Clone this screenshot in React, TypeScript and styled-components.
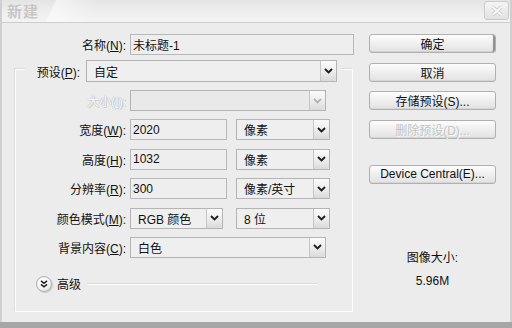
import React from 'react'
import styled, { createGlobalStyle } from 'styled-components'

const GlobalStyle = createGlobalStyle`
  html, body {
    margin: 0;
    padding: 0;
    background: #a8a8a8;
  }
  * {
    box-sizing: border-box;
  }
`

const FONT = `"Liberation Sans", "Noto Sans CJK SC", sans-serif`

const Chevron = ({ disabled }: { disabled?: boolean }) => (
  <svg width="9" height="6" viewBox="0 0 9 6">
    <polyline
      points="1,1 4.5,4.5 8,1"
      fill="none"
      stroke={disabled ? '#b4b4b4' : '#1e1e1e'}
      strokeWidth="1.9"
    />
  </svg>
)

const Select = ({
  width,
  value,
  disabled,
}: {
  width: number
  value?: string
  disabled?: boolean
}) => (
  <SelectBox $width={width} $disabled={disabled}>
    <SelectText>{value}</SelectText>
    <ArrowButton>
      <Chevron disabled={disabled} />
    </ArrowButton>
  </SelectBox>
)

const App = () => {
  return (
    <Window>
      <GlobalStyle />
      <Frame>
        <TitleBar>
          <Title>新建</Title>
          <CloseButton>
            <svg width="12" height="10" viewBox="0 0 12 10">
              <path d="M1.5 1 L10.5 9 M10.5 1 L1.5 9" stroke="#c4c4c4" strokeWidth="3.4" />
              <path d="M1.5 1 L10.5 9 M10.5 1 L1.5 9" stroke="#fafafa" strokeWidth="1.8" />
            </svg>
          </CloseButton>
        </TitleBar>

        <Body>
          <LeftColumn>
            <NameRow>
              <Label $width={111}>
                名称(<u>N</u>):
              </Label>
              <TextInput $width={224}>未标题-1</TextInput>
            </NameRow>

            <GroupBox>
              <PresetRow>
                <Label $width={49}>
                  预设(<u>P</u>):
                </Label>
                <Select width={251} value="自定" />
              </PresetRow>

              <Fields>
                <Row>
                  <Label $width={110} $disabled>
                    大小(<u>I</u>):
                  </Label>
                  <Select width={196} disabled />
                </Row>
                <Row>
                  <Label $width={110}>
                    宽度(<u>W</u>):
                  </Label>
                  <TextInput $width={97}>2020</TextInput>
                  <Spacer $w={1} />
                  <Select width={94} value="像素" />
                </Row>
                <Row>
                  <Label $width={110}>
                    高度(<u>H</u>):
                  </Label>
                  <TextInput $width={97}>1032</TextInput>
                  <Spacer $w={1} />
                  <Select width={94} value="像素" />
                </Row>
                <Row>
                  <Label $width={110}>
                    分辨率(<u>R</u>):
                  </Label>
                  <TextInput $width={97}>300</TextInput>
                  <Spacer $w={1} />
                  <Select width={94} value="像素/英寸" />
                </Row>
                <Row>
                  <Label $width={110}>
                    颜色模式(<u>M</u>):
                  </Label>
                  <Select width={93} value="RGB 颜色" />
                  <Spacer $w={5} />
                  <Select width={94} value="8 位" />
                </Row>
                <Row>
                  <Label $width={110}>
                    背景内容(<u>C</u>):
                  </Label>
                  <Select width={196} value="白色" />
                </Row>
              </Fields>

              <AdvancedRow>
                <RoundToggle>
                  <svg width="8" height="8" viewBox="0 0 8 8">
                    <polyline points="1,0.8 4,3.3 7,0.8" fill="none" stroke="#1e1e1e" strokeWidth="1.5" />
                    <polyline points="1,4.3 4,6.8 7,4.3" fill="none" stroke="#1e1e1e" strokeWidth="1.5" />
                  </svg>
                </RoundToggle>
                <AdvancedText>高级</AdvancedText>
                <Rule />
              </AdvancedRow>
            </GroupBox>
          </LeftColumn>

          <RightColumn>
            <Button $default>确定</Button>
            <Button>取消</Button>
            <Button>存储预设(S)...</Button>
            <Button $disabled>删除预设(D)...</Button>
            <Button $gap={26}>Device Central(E)...</Button>
            <SizeInfo>
              <span>图像大小:</span>
              <span>5.96M</span>
            </SizeInfo>
          </RightColumn>
        </Body>
      </Frame>
    </Window>
  )
}
export default App

const Window = styled.div`
  width: 512px;
  height: 328px;
  background: #a6a6a6;
  font-family: ${FONT};
  font-size: 12px;
  color: #111;
  overflow: hidden;
`

const Frame = styled.div`
  height: 322px;
  background: #ececec;
  border-left: 2px solid #cfcfcf;
  border-right: 2px solid #cfcfcf;
  display: flex;
  flex-direction: column;
`

const TitleBar = styled.div`
  height: 23px;
  flex-shrink: 0;
  display: flex;
  align-items: center;
  justify-content: space-between;
  padding: 0 1px 2px 5px;
  border-bottom: 1px solid #cdcdcd;
  background:
    linear-gradient(115deg, transparent 48px, rgba(255, 255, 255, 0.55) 50px, transparent 90px),
    linear-gradient(180deg, #e4e4e4 0%, #efefef 60%, #f3f3f3 100%);
`

const Title = styled.span`
  font-size: 15px;
  font-weight: bold;
  color: #c6c6c6;
  letter-spacing: 1px;
  text-shadow: 0 1px 0 #f8f8f8;
`

const CloseButton = styled.div`
  width: 25px;
  height: 19px;
  margin-top: 1px;
  border: 1px solid #cbcbcb;
  border-radius: 3px;
  background: linear-gradient(180deg, #f4f4f4, #e2e2e2);
  display: flex;
  align-items: center;
  justify-content: center;
`

const Body = styled.div`
  flex: 1;
  display: flex;
  padding: 11px 0 0 13px;
  gap: 15px;
`

const LeftColumn = styled.div`
  width: 339px;
  display: flex;
  flex-direction: column;
`

const NameRow = styled.div`
  display: flex;
  align-items: center;
  gap: 4px;
  height: 21px;
`

const Row = styled(NameRow)``

const Label = styled.span<{ $width: number; $disabled?: boolean }>`
  width: ${(p) => p.$width}px;
  flex-shrink: 0;
  text-align: right;
  white-space: nowrap;
  color: ${(p) => (p.$disabled ? '#fdfdfd' : '#111')};
  text-shadow: ${(p) =>
    p.$disabled ? '0 0 1px #b2b2b2, 0 0 1px #b2b2b2, 1px 1px 0 #d4d4d4' : 'none'};

  u {
    text-underline-offset: 1px;
  }
`

const TextInput = styled.div<{ $width: number }>`
  width: ${(p) => p.$width}px;
  height: 21px;
  border: 1px solid #b8b8b8;
  background: #eeeeee;
  padding: 0 2px;
  display: flex;
  align-items: center;
  white-space: nowrap;
`

const Spacer = styled.span<{ $w: number }>`
  width: ${(p) => p.$w}px;
  flex-shrink: 0;
`

const SelectBox = styled.div<{ $width: number; $disabled?: boolean }>`
  width: ${(p) => p.$width}px;
  height: 21px;
  flex-shrink: 0;
  border: 1px solid #b4b4b4;
  background: ${(p) => (p.$disabled ? '#e9e9e9' : '#efefef')};
  display: flex;
  align-items: stretch;
`

const SelectText = styled.span`
  flex: 1;
  padding-left: 7px;
  display: flex;
  align-items: center;
  white-space: nowrap;
`

const ArrowButton = styled.span`
  width: 16px;
  border-left: 1px solid #c6c6c6;
  border-radius: 0 2px 2px 0;
  background: linear-gradient(180deg, #fbfbfb 0%, #ececec 55%, #dadada 100%);
  display: flex;
  align-items: center;
  justify-content: center;
`

const GroupBox = styled.div`
  margin-top: 14px;
  width: 338px;
  height: 243px;
  border: 1px solid #fdfdfd;
  box-shadow: -1px -1px 0 #dcdcdc;
  display: flex;
  flex-direction: column;
`

const PresetRow = styled.div`
  margin: -10px 0 0 9px;
  width: 316px;
  height: 22px;
  padding: 0 4px 0 6px;
  background: #ececec;
  display: flex;
  align-items: center;
  gap: 6px;

  ${SelectBox} {
    height: 22px;
  }
`

const Fields = styled.div`
  padding-top: 8px;
  display: flex;
  flex-direction: column;
  gap: 8.4px;
`

const AdvancedRow = styled.div`
  margin-top: 18px;
  height: 16px;
  padding-left: 20px;
  padding-right: 34px;
  display: flex;
  align-items: center;
  gap: 5px;
`

const RoundToggle = styled.span`
  width: 16px;
  height: 16px;
  border-radius: 50%;
  border: 1px solid #b0b0b0;
  background: radial-gradient(circle at 40% 35%, #ffffff 0%, #f4f4f4 50%, #d6d6d6 100%);
  box-shadow: 1px 1px 1px rgba(0, 0, 0, 0.15);
  display: flex;
  align-items: center;
  justify-content: center;
`

const AdvancedText = styled.span`
  white-space: nowrap;
`

const Rule = styled.span`
  flex: 1;
  margin-left: 1px;
  border-top: 1px solid #dcdcdc;
  border-bottom: 1px solid #fdfdfd;
`

const RightColumn = styled.div`
  width: 127px;
  display: flex;
  flex-direction: column;
  gap: 9.5px;
`

const Button = styled.div<{ $default?: boolean; $disabled?: boolean; $gap?: number }>`
  height: 19px;
  margin-top: ${(p) => (p.$gap ? p.$gap - 9.5 : 0)}px;
  border: 1px solid #b0b0b0;
  border-radius: 3px;
  background: linear-gradient(180deg, #fdfdfd 0%, #f0f0f0 45%, #e2e2e2 100%);
  box-shadow: ${(p) =>
    p.$default ? 'inset -3px 0 1px -1px #8c8c8c, inset 0 -1px 0 #d0d0d0' : 'inset 0 -1px 0 #d6d6d6'};
  display: flex;
  align-items: center;
  justify-content: center;
  white-space: nowrap;
  color: ${(p) => (p.$disabled ? '#c4c4c4' : '#111')};
  text-shadow: ${(p) => (p.$disabled ? '1px 1px 0 #fafafa' : 'none')};
`

const SizeInfo = styled.div`
  margin-top: 58px;
  display: flex;
  flex-direction: column;
  align-items: center;
  gap: 9px;
  line-height: 14px;
`
